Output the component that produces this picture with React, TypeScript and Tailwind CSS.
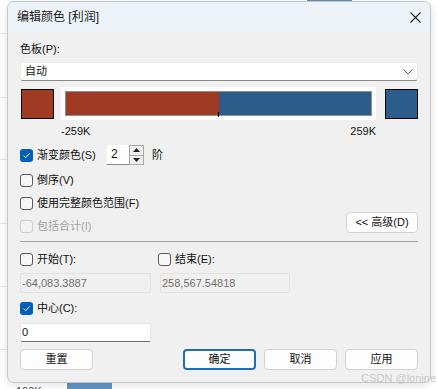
import type { ReactNode } from 'react';

// Small Win11-style checkbox
function Check({ checked = false, disabled = false }: { checked?: boolean; disabled?: boolean }) {
    if (checked) {
        return (
            <span className="flex w-[13px] h-[13px] shrink-0 items-center justify-center rounded-[3px] bg-[#005fb8]">
                <svg width="9" height="9" viewBox="0 0 9 9" fill="none">
                    <path d="M1.5 4.6 L3.6 6.7 L7.6 2.4" stroke="#fff" strokeWidth="1" />
                </svg>
            </span>
        );
    }
    return (
        <span
            className={
                disabled
                    ? 'block w-[13px] h-[13px] shrink-0 rounded-[3px] border border-[#cdcdcd] bg-[#f3f3f3]'
                    : 'block w-[13px] h-[13px] shrink-0 rounded-[3px] border border-[#5b5b5b] bg-[#f7f7f7]'
            }
        />
    );
}

function CheckRow({ label, checked, disabled, className = '' }: { label: string; checked?: boolean; disabled?: boolean; className?: string }) {
    return (
        <div className={'flex items-center gap-[4px] h-[16px] ' + className}>
            <Check checked={checked} disabled={disabled} />
            <span className={disabled ? 'text-[#a3a3a3] leading-[16px]' : 'leading-[16px]'}>{label}</span>
        </div>
    );
}

function Btn({ children, primary = false, className = '' }: { children: ReactNode; primary?: boolean; className?: string }) {
    return (
        <div
            className={
                'flex h-[21px] items-center justify-center rounded-[4px] bg-[#fdfdfd] ' +
                (primary ? 'border-2 border-[#1f6cb7] ' : 'border border-[#d2d2d2] ') +
                className
            }
        >
            {children}
        </div>
    );
}

export default function App() {
    const gridLines = [33, 97, 159, 223, 286, 349];

    return (
        <div className="relative w-[438px] h-[389px] overflow-hidden bg-white font-['Liberation_Sans','Noto_Sans_CJK_SC',sans-serif] text-[11px] text-[#111]">
            {/* page behind the dialog */}
            {gridLines.map((y) => (
                <div key={y} className="absolute left-0 w-[10px] h-px bg-[#e6e6e6]" style={{ top: y }} />
            ))}
            <div className="absolute left-[307px] top-0 w-[45px] h-[2px] bg-[#5f8fbf]" />
            <div className="absolute left-[67px] top-[383px] w-[45px] h-[6px] bg-[#6393c3]" />
            <div className="absolute left-[16px] top-[384px] text-[11px] text-[#444] leading-[14px]">100K</div>

            <div className="pt-px pl-[7px]">
                <div className="relative w-[424px] h-[382px] rounded-[7px] border border-[#c6c6c6] bg-[#f0f0f0] shadow-[0_2px_8px_rgba(0,0,0,0.12)] overflow-hidden flex flex-col">
                    {/* title bar */}
                    <div className="flex h-[30px] shrink-0 items-center justify-between bg-[#eef2f9] pl-[9px] pr-[9px]">
                        <span className="text-[12px] text-[#1a1a1a]">编辑颜色 [利润]</span>
                        <svg width="11" height="11" viewBox="0 0 11 11">
                            <path d="M0.5 0.5 L10.5 10.5 M10.5 0.5 L0.5 10.5" stroke="#222" strokeWidth="1.1" />
                        </svg>
                    </div>

                    {/* body */}
                    <div className="flex flex-col px-[12px]">
                        <div className="mt-[9px] h-[16px] leading-[16px]">色板(P):</div>

                        <div className="mt-[5px] flex h-[19px] items-center justify-between rounded-[3px] border border-[#ececec] border-b-[#8a8a8a] bg-white pl-[4px] pr-[4px]">
                            <span>自动</span>
                            <svg width="10" height="6" viewBox="0 0 10 6" fill="none">
                                <path d="M0.5 0.5 L5 5 L9.5 0.5" stroke="#555" strokeWidth="1" />
                            </svg>
                        </div>

                        {/* palette */}
                        <div className="mt-[6px] flex h-[33px] items-center">
                            <div className="ml-px w-[33px] h-[30px] border border-black bg-[#9e3b22]" />
                            <div className="relative ml-[7px] w-[315px] h-[33px] bg-white p-[4px]">
                                <div className="flex h-full border border-[#8f8f8f]">
                                    <div className="flex-1 bg-[#9e3b22]" />
                                    <div className="flex-1 bg-[#2c5d8a]" />
                                </div>
                                <div className="absolute left-[157px] bottom-[3px] w-px h-[5px] bg-black" />
                            </div>
                            <div className="ml-[9px] w-[33px] h-[30px] border border-black bg-[#2c5d8a]" />
                        </div>

                        <div className="mt-[4px] flex h-[14px] items-center justify-between pl-[41px] pr-[42px] leading-[14px]">
                            <span>-259K</span>
                            <span>259K</span>
                        </div>

                        {/* gradient row */}
                        <div className="mt-[7px] flex h-[20px] items-center">
                            <CheckRow label="渐变颜色(S)" checked className="w-[87px]" />
                            <div className="flex h-[20px]">
                                <div className="w-[22px] bg-white border-b border-[#8a8a8a] pl-[4px] text-[12px] leading-[19px]">2</div>
                                <div className="flex w-[15px] flex-col border border-[#a9a9a9] bg-[#efefef]">
                                    <div className="flex flex-1 items-center justify-center border-b border-[#a9a9a9]">
                                        <svg width="7" height="4" viewBox="0 0 7 4"><path d="M3.5 0 L7 4 L0 4 Z" fill="#222" /></svg>
                                    </div>
                                    <div className="flex flex-1 items-center justify-center">
                                        <svg width="7" height="4" viewBox="0 0 7 4"><path d="M0 0 L7 0 L3.5 4 Z" fill="#222" /></svg>
                                    </div>
                                </div>
                            </div>
                            <span className="ml-[8px]">阶</span>
                        </div>

                        <CheckRow label="倒序(V)" className="mt-[7px]" />
                        <CheckRow label="使用完整颜色范围(F)" className="mt-[7px]" />

                        <div className="mt-px flex items-start">
                            <CheckRow label="包括合计(I)" disabled className="mt-[6px]" />
                            <Btn className="ml-auto w-[72px]">&lt;&lt; 高级(D)</Btn>
                        </div>

                        <div className="mt-[7px] h-px bg-[#a3a3a3]" />

                        <div className="mt-[9px] flex">
                            <CheckRow label="开始(T):" className="w-[138px]" />
                            <CheckRow label="结束(E):" />
                        </div>

                        <div className="mt-[6px] flex gap-[9px]">
                            <div className="w-[131px] h-[20px] rounded-[2px] border border-[#e2e2e2] pl-[1px] text-[#707070] leading-[18px]">-64,083.3887</div>
                            <div className="w-[130px] h-[20px] rounded-[2px] border border-[#e2e2e2] pl-[1px] text-[#707070] leading-[18px]">258,567.54818</div>
                        </div>

                        <CheckRow label="中心(C):" checked className="mt-[7px]" />

                        <div className="mt-[7px] w-[131px] h-[19px] rounded-[2px] border border-[#e6e6e6] border-b-[#6f6f6f] bg-white pl-[1px] leading-[17px]">0</div>

                        <div className="mt-[7px] flex">
                            <Btn className="w-[73px]">重置</Btn>
                            <div className="ml-auto flex gap-[8px]">
                                <Btn primary className="w-[73px]">确定</Btn>
                                <Btn className="w-[73px]">取消</Btn>
                                <Btn className="w-[73px]">应用</Btn>
                            </div>
                        </div>
                    </div>
                </div>
            </div>

            <div className="absolute right-[2px] top-[371px] text-[11px] text-[#c9c9c9] leading-[14px]">CSDN @lonine</div>
        </div>
    );
}
